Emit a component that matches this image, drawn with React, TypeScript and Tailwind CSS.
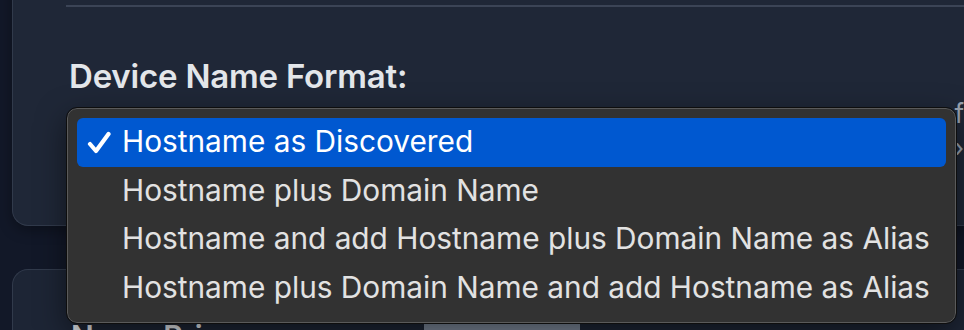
import { ReactNode } from "react";

const options = [
    "Hostname as Discovered",
    "Hostname plus Domain Name",
    "Hostname and add Hostname plus Domain Name as Alias",
    "Hostname plus Domain Name and add Hostname as Alias",
];

function CheckIcon(): ReactNode {
    return (
        <svg width="24" height="23" viewBox="0 0 24 23" fill="none">
            <path d="M3 13 L9 20 L21.5 3" stroke="white" strokeWidth="4.2" strokeLinecap="round" strokeLinejoin="round" />
        </svg>
    );
}

export default function App(): ReactNode {
    const selected = 0;

    return (
        <div className="relative w-[964px] h-[330px] overflow-hidden bg-[#121828] font-['Inter',sans-serif]">
            <div className="ml-[12px] mt-[-20px] h-[246px] rounded-bl-[16px] border-l border-b border-[#313a4b] bg-[#1f2737] pl-[53px] shadow-[0_4px_14px_rgba(0,0,0,0.35)]">
                <div className="h-[27px] border-b-2 border-[#3b4456]" />
                <h2 className="mt-[52px] ml-[3px] text-[33px] leading-[34px] font-semibold text-[#e3e6ea] tracking-[-0.2px]">
                    Device Name Format:
                </h2>
                <div className="mt-[4px] flex flex-col items-end text-[26px] leading-[34px] text-[#9aa3b1]">
                    <span>f</span>
                    <span>›</span>
                </div>
            </div>

            <div className="ml-[12px] mt-[43px] h-[80px] rounded-tl-[16px] border-l border-t border-[#313a4b] bg-[#1d2535] pl-[58px] pt-[51px] flex items-start">
                <span className="w-[353px] text-[30px] leading-none font-semibold text-[#e3e6ea]">Name Prio</span>
                <div className="mt-[2px] w-[156px] h-[20px] bg-[#7b8799]" />
            </div>

            <div className="absolute left-[67px] top-[108px] w-[889px] h-[215px] rounded-[10px] bg-[#323232] border border-[#5a5a5a] outline outline-1 outline-[#0e0e0e] p-[9px] shadow-[0_10px_30px_rgba(0,0,0,0.5)]">
                {options.map((option: string, index: number) => {
                    const isSelected = index === selected;
                    return (
                        <div
                            key={option}
                            className={
                                isSelected
                                    ? "h-[48.5px] flex items-center rounded-[6px] bg-[#0058d0] text-white"
                                    : "h-[48.5px] flex items-center rounded-[6px] text-[#e2e2e2]"
                            }
                        >
                            <div className="w-[45px] flex justify-end pr-[11px]">
                                {isSelected && <CheckIcon />}
                            </div>
                            <span className="text-[29.8px] leading-none">{option}</span>
                        </div>
                    );
                })}
            </div>
        </div>
    );
}
